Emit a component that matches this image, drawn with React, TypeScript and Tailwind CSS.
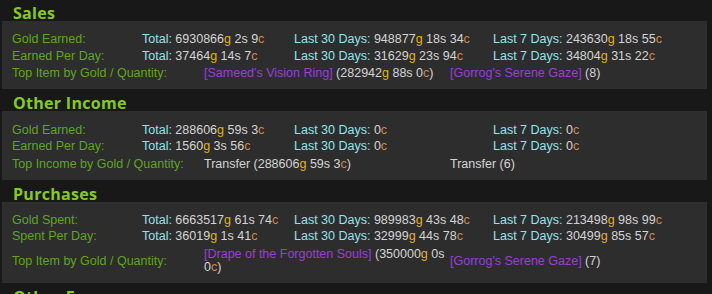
import React from "react";

type Money = { g?: number; s?: number; c: number };

const body = "font-['Liberation_Sans',Arial,sans-serif]";

function Coins({ m }: { m: Money }) {
  return (
    <span className="text-[#d4d4d4]">
      {m.g !== undefined && (
        <>
          {m.g}
          <span className="text-[#e3b311]">g</span>{" "}
        </>
      )}
      {m.s !== undefined && <>{m.s}s </>}
      {m.c}
      <span className="text-[#d2894c]">c</span>
    </span>
  );
}

function StatRow({ label, total, d30, d7 }: { label: string; total: Money; d30: Money; d7: Money }) {
  return (
    <div className="grid grid-cols-[130px_152px_199px_1fr] py-[1.5px] leading-[13.5px] whitespace-nowrap">
      <span className="text-[#5ea61e]">{label}</span>
      <span>
        <span className="text-[#92e4ea]">Total: </span>
        <Coins m={total} />
      </span>
      <span>
        <span className="text-[#92e4ea]">Last 30 Days: </span>
        <Coins m={d30} />
      </span>
      <span>
        <span className="text-[#92e4ea]">Last 7 Days: </span>
        <Coins m={d7} />
      </span>
    </div>
  );
}

function TopRow({ label, gold, qty }: { label: string; gold: React.ReactNode; qty: React.ReactNode }) {
  return (
    <div className="grid grid-cols-[192px_246px_1fr] items-center pt-[2.5px] pb-[1.5px] leading-[13.5px]">
      <span className="text-[#5ea61e] whitespace-nowrap">{label}</span>
      <span className="text-[#d4d4d4]">{gold}</span>
      <span className="text-[#d4d4d4] whitespace-nowrap">{qty}</span>
    </div>
  );
}

const Item = ({ name }: { name: string }) => <span className="text-[#9b3ddc]">[{name}]</span>;

function Section({ title, children }: { title: string; children?: React.ReactNode }) {
  return (
    <section>
      <h2 className="h-[22px] pt-[7px] pl-[11px] leading-[15px] text-[16px] font-bold text-[#86cb1c] font-['Open_Sans',sans-serif] tracking-[0.3px]">
        {title}
      </h2>
      {children && (
        <div className={`bg-[#2d2d2d] pt-[10.75px] pb-[7px] pl-[10px] text-[12.5px] ${body}`}>{children}</div>
      )}
    </section>
  );
}

export default function App() {
  return (
    <div className="h-[294px] overflow-hidden w-full bg-[#181818] pl-[2px] pr-[5px]">
      <div className="-mt-px">
        <Section title="Sales">
          <StatRow label="Gold Earned:" total={{ g: 6930866, s: 2, c: 9 }} d30={{ g: 948877, s: 18, c: 34 }} d7={{ g: 243630, s: 18, c: 55 }} />
          <StatRow label="Earned Per Day:" total={{ g: 37464, s: 14, c: 7 }} d30={{ g: 31629, s: 23, c: 94 }} d7={{ g: 34804, s: 31, c: 22 }} />
          <TopRow
            label="Top Item by Gold / Quantity:"
            gold={<><Item name="Sameed's Vision Ring" /> (<Coins m={{ g: 282942, s: 88, c: 0 }} />)</>}
            qty={<><Item name="Gorrog's Serene Gaze" /> (8)</>}
          />
        </Section>
        <Section title="Other Income">
          <StatRow label="Gold Earned:" total={{ g: 288606, s: 59, c: 3 }} d30={{ c: 0 }} d7={{ c: 0 }} />
          <StatRow label="Earned Per Day:" total={{ g: 1560, s: 3, c: 56 }} d30={{ c: 0 }} d7={{ c: 0 }} />
          <TopRow
            label="Top Income by Gold / Quantity:"
            gold={<>Transfer (<Coins m={{ g: 288606, s: 59, c: 3 }} />)</>}
            qty={<>Transfer (6)</>}
          />
        </Section>
        <Section title="Purchases">
          <StatRow label="Gold Spent:" total={{ g: 6663517, s: 61, c: 74 }} d30={{ g: 989983, s: 43, c: 48 }} d7={{ g: 213498, s: 98, c: 99 }} />
          <StatRow label="Spent Per Day:" total={{ g: 36019, s: 1, c: 41 }} d30={{ g: 32999, s: 44, c: 78 }} d7={{ g: 30499, s: 85, c: 57 }} />
          <TopRow
            label="Top Item by Gold / Quantity:"
            gold={<><Item name="Drape of the Forgotten Souls" /> (<Coins m={{ g: 350000, s: 0, c: 0 }} />)</>}
            qty={<><Item name="Gorrog's Serene Gaze" /> (7)</>}
          />
        </Section>
        <Section title="Other Expenses" />
      </div>
    </div>
  );
}
